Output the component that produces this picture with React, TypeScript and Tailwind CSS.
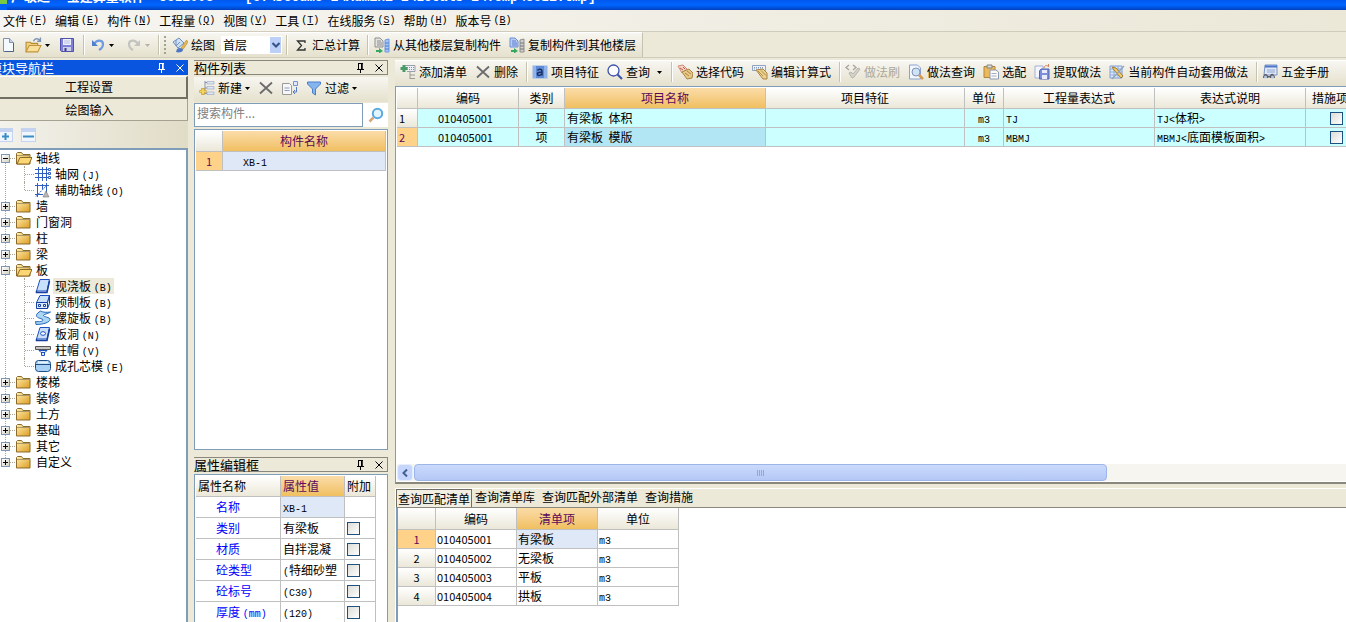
import type { ReactNode } from 'react';
import clsx from 'clsx';

const GRAD_HEAD = 'bg-gradient-to-b from-white to-[#ebe8d9]';
const GRAD_HOT = 'bg-gradient-to-b from-[#fbdca8] to-[#f0bf5f] text-[#5a0a5a]';
const GRAD_BAR = 'bg-gradient-to-b from-[#f7f6f1] to-[#e5e1cd]';
const CELL = 'border-r border-b border-[#c0c0c0] p-0 font-normal whitespace-nowrap overflow-hidden';

// Latin runs are set half as wide as the Chinese characters around them
function Mixed({ text }: { text: string }) {
  return (
    <>
      {text.split(/([\x21-\x7e]+)/).map((part, i) => {
        if (!part) return null;
        if (/^\d+$/.test(part)) return <span key={i} className="text-[11px] leading-none">{part}</span>;
        if (i % 2) return <span key={i} className="font-['Liberation_Mono',monospace] text-[10px] leading-none">{part}</span>;
        return <span key={i}>{part}</span>;
      })}
    </>
  );
}

/* ---------- icons ---------- */

function Svg({ children, size = 16 }: { children: ReactNode; size?: number }) {
  return <svg width={size} height={size} viewBox="0 0 16 16" className="shrink-0" aria-hidden="true">{children}</svg>;
}

const NewFile = () => (
  <Svg>
    <path d="M3.500 1.500h6l4 4v9h-10z" fill="#f4f8ff" stroke="#8391ad" />
    <path d="M9.500 1.500v4h4" fill="#c9d6ec" stroke="#8391ad" />
    <path d="M13.500 6v8.500h-9" fill="none" stroke="#4e6284" />
  </Svg>
);

const OpenFile = () => (
  <Svg size={17}>
    <path d="M1 14V5h4l1 1h6v3" fill="#f2d080" stroke="#b58b30" />
    <path d="M1 14l3-6h11l-3 6z" fill="#fbe09a" stroke="#c1933a" />
    <path d="M8 4c1-3 4-3 6-1M14.500 0.500v3.500h-3" fill="none" stroke="#7d93b5" strokeWidth="1.300" />
  </Svg>
);

const Save = () => (
  <Svg>
    <path d="M1.500 1.500h13v13h-12l-1-1z" fill="#7f80d8" stroke="#5152ac" />
    <path d="M4 2h8v6H4z" fill="#eef0fb" />
    <path d="M5 4h6M5 6h6" stroke="#b9bde3" />
    <path d="M4 10h8v4H4z" fill="#cdd0e8" />
    <path d="M5.500 11h2v3h-2z" fill="#3a3b86" />
  </Svg>
);

const Undo = ({ off = false }: { off?: boolean }) => (
  <Svg>
    <g transform={off ? 'matrix(-1 0 0 1 16 0)' : undefined}>
      <path d="M4 7c3-5 9-4 9 0 0 3-2 5-4 6" fill="none" stroke={off ? '#c3c3bf' : '#6e9be0'} strokeWidth="2.200" />
      <path d="M2 3v6h6z" fill={off ? '#c3c3bf' : '#4f7fd0'} />
    </g>
  </Svg>
);

const Draw = () => (
  <Svg>
    <path d="M1 5l6-4 5 5-6 5z" fill="#cfe0f4" stroke="#6d8fc0" />
    <path d="M4 3v6l4-4" fill="none" stroke="#6d8fc0" />
    <path d="M14.500 3L9 11l2 1.500L16 5z" fill="#e9b84c" stroke="#9d7a2c" strokeWidth=".5" />
    <path d="M5 12c2-2 6-1 6 1s-4 3-7 2z" fill="#4d78c4" />
  </Svg>
);

const CopyFloor = ({ flip = false }: { flip?: boolean }) => (
  <Svg>
    <path d="M1 1h5l3 3v6H1z" fill={flip ? '#b9cdf3' : '#e3e3e3'} stroke={flip ? '#6a8ed8' : '#8f8f8f'} />
    <path d="M3 4h4M3 6h5M3 8h5" stroke={flip ? '#5d7fd0' : '#8b8b8b'} />
    <path d="M11 3l4-1v13h-4z" fill={flip ? '#cfcfcf' : '#a9c5f5'} stroke={flip ? '#8d8d8d' : '#6c98e0'} />
    <path d="M11 6h4M11 9h4M11 12h4" stroke={flip ? '#777' : '#4d7fd6'} />
    <path d="M2 11v2h3v-2l4 3-4 2.500V15H2z" fill="#37a860" />
  </Svg>
);

const AddList = () => (
  <Svg>
    <path d="M5 1.500h10v6H7" fill="#eef0f4" stroke="#9aa0ac" />
    <path d="M7 3.500h7M7 5.500h7" stroke="#8b93a8" strokeDasharray="1 1" />
    <path d="M10 8v7M10 11h5M10 14.500h5" fill="none" stroke="#9a9a9a" />
    <path d="M4 1v7M.5 4.500h7" stroke="#4b9b68" strokeWidth="3" />
  </Svg>
);

const Cross = () => (
  <Svg><path d="M2 2.500l12 11M14 2.500l-12 11" stroke="#6b6b6b" strokeWidth="1.800" fill="none" /></Svg>
);

const Feature = () => (
  <Svg>
    <path d="M.5 1.500h15v13H.5z" fill="#8fb3ea" />
    <path d="M4 2h8v12H4z" fill="#5d8bd6" />
    <path d="M5.500 6.500c1-2 4.500-1.500 4.500.5v4.500M10 8.500c-4-.5-5 .5-4.500 2s3 1 4.500-.5" fill="none" stroke="#1b2f63" strokeWidth="1.500" />
  </Svg>
);

const Magnify = ({ soft = false }: { soft?: boolean }) => (
  <Svg>
    {soft ? (
      <>
        <path d="M5.500 10.500L1.500 14.500" stroke="#d8a878" strokeWidth="2.500" />
        <circle cx="9.500" cy="6.500" r="4.700" fill="#e2f4fc" stroke="#5aa9e0" strokeWidth="2" />
      </>
    ) : (
      <>
        <circle cx="6.500" cy="6.500" r="5.500" fill="#fdfdff" stroke="#3b4fae" strokeWidth="1.300" />
        <path d="M10.500 10.500l4.500 4.500" stroke="#3b4fae" strokeWidth="2" />
      </>
    )}
  </Svg>
);

const PickCode = () => (
  <Svg>
    <path d="M1 2l5-1 4 4-5 4z" fill="#f6d3c4" stroke="#cf8d78" />
    <path d="M3 4l3 2M6 3l2 2" stroke="#c05a4a" />
    <path d="M5 8l7-3 4 4-1 5-5 1z" fill="#e8c987" stroke="#a98343" />
    <path d="M8 9l4 3M10 7l4 3" stroke="#a98343" />
  </Svg>
);

const EditExpr = () => (
  <Svg>
    <path d="M.5 1.500h13v5H.5z" fill="#eef3fb" stroke="#90a3c4" />
    <path d="M2 3.500h10M2 5h10" stroke="#8598bb" strokeDasharray="1 1" />
    <path d="M4 6l7-1 4 4v6h-4z" fill="#ecd08e" stroke="#a98343" />
    <path d="M6 7l5 5M9 6.500l5 5" stroke="#b18c4a" />
  </Svg>
);

const BrushOff = () => (
  <Svg>
    <path d="M4 1L1 3.500 4 6M8 1l3 2.500L8 6" fill="none" stroke="#a5a5a0" strokeWidth="1.300" />
    <path d="M4 9l3 5 2-1 6-8-2-1-5 6-2-2z" fill="#d4d3cc" stroke="#b5b4ac" />
  </Svg>
);

const FindDoc = () => (
  <Svg>
    <path d="M1.500 1h8l3 3v11h-11z" fill="#f2f7ff" stroke="#8aa2cc" />
    <circle cx="8" cy="8" r="4" fill="#cfe2f6" stroke="#7d92b5" />
    <path d="M11 11l4 4" stroke="#d89a4e" strokeWidth="2.500" />
  </Svg>
);

const Paste = () => (
  <Svg>
    <path d="M1 2.500h11v11H1z" fill="#e9b95c" stroke="#b2843a" />
    <path d="M4 1h5v3H4z" fill="#d9d9d9" stroke="#858585" />
    <path d="M7 6h6l2.500 2v7H7z" fill="#fafafa" stroke="#8e98ad" />
    <path d="M8.500 9.500h5M8.500 12h5" stroke="#a4aec4" />
  </Svg>
);

const Extract = () => (
  <Svg>
    <path d="M1 2h8v12H1z" fill="#f3f6ff" stroke="#a3b0d6" />
    <path d="M7 5h8v10H5.500V7z" fill="#7d8fdc" stroke="#5263b3" />
    <path d="M8 6h5v3H8zM8 11h5v4H8z" fill="#e8ecfb" />
    <path d="M10 4c0-2 2-3 4-2M14.500 0v3" fill="none" stroke="#d0835a" />
  </Svg>
);

const AutoApply = () => (
  <Svg>
    <path d="M1 2h12v12H1z" fill="#dce9fb" stroke="#7c9ed6" />
    <path d="M1 5h12M1 8h12M1 11h12M5 2v12M9 2v12" stroke="#8faee0" />
    <path d="M3 3l4 1 7 8-2 2-7-8z" fill="#f0cd6a" stroke="#a37d30" />
    <path d="M15 2L3 15" stroke="#93a3bf" strokeWidth="1.300" />
  </Svg>
);

const Handbook = () => (
  <Svg>
    <path d="M3 1h12v10H2z" fill="#dfe8f8" stroke="#7a93c4" />
    <path d="M3 2.500h12" stroke="#4f77c8" strokeWidth="2" />
    <path d="M5 6h8M5 8h8" stroke="#92a6cf" />
    <path d="M1 14c0-5 4-5 5-2h2c1-4 5-2 5 2H8l-1-1-1 1z" fill="#5b5f68" />
    <circle cx="3.500" cy="13" r="1.500" fill="#b6c7e4" />
    <circle cx="10.500" cy="13" r="1.500" fill="#b6c7e4" />
  </Svg>
);

const NewItem = () => (
  <Svg>
    <path d="M6 1v13M6 2.500h9M6 8h9M6 13.500h9" fill="none" stroke="#8295b5" />
    <path d="M8 1.500h7v2.500H8zM8 6.500h7V9H8zM8 12h7v2.500H8z" fill="#dfe6f2" stroke="#93a3c0" strokeWidth=".6" />
    <path d="M4 8v7M.5 11.500h7" stroke="#b98f28" strokeWidth="3.200" />
    <path d="M4 8.500v6M1 11.500h6" stroke="#f4d665" strokeWidth="1.800" />
  </Svg>
);

const CopyItem = () => (
  <Svg>
    <path d="M.5 3.500h7l2 2v9h-9z" fill="#f7f7f7" stroke="#9a9a9a" />
    <path d="M2.500 8h5M2.500 10.500h5" stroke="#8e9dbd" />
    <path d="M11.500 1.500h4v4h-4z" fill="#dfe9fb" stroke="#7893cd" />
    <path d="M14.500 7v5H11M13 10l-2 2 2 2" fill="none" stroke="#5478c6" />
  </Svg>
);

const Filter = () => (
  <Svg><path d="M1.500 2h13v2L9.500 9v6l-3-2V9l-5-5z" fill="#86b4ee" stroke="#4a7fcb" /></Svg>
);

const Folder = ({ open }: { open?: boolean }) => (
  <Svg>
    <defs>
      <linearGradient id="fold" x1="0" y1="0" x2="1" y2="1">
        <stop offset="0" stopColor="#fff0b0" />
        <stop offset="1" stopColor="#dd9c22" />
      </linearGradient>
    </defs>
    <path d="M.5 14V3.500l1-1h4l1.500 2h7V14z" fill="url(#fold)" stroke="#8c6a28" />
    <path d="M1 5.500h13" stroke="#a99a6a" />
    {open && <path d="M1 14L4 7.500h12L13 14z" fill="#fbd672" stroke="#8c6a28" />}
  </Svg>
);

const treeIcons: Record<string, ReactNode> = {
  grid: (
    <Svg>
      <path d="M3.500 1v14M7.500 1v14M11.500 1v14M0 3.500h13M0 7.500h13M0 11.500h13" stroke="#2f5fc4" />
      <path d="M13.500 2.500h2v2h-2zM13.500 6.500h2v2h-2zM13.500 10.500h2v2h-2z" fill="#fff" stroke="#2f5fc4" />
    </Svg>
  ),
  aux: (
    <Svg>
      <path d="M2.500 1v14M11.500 1v14M7.500 2v5M0 3.500h14M0 12.500h8" stroke="#2f5fc4" />
      <path d="M1 14.500L12 3" stroke="#2f5fc4" strokeDasharray="2 1" />
      <path d="M8 15l3-6 3 6z" fill="#b9b9b9" stroke="#777" strokeWidth=".6" />
    </Svg>
  ),
  slab: (
    <Svg>
      <path d="M5 1.500h9.500L12 13H1.500z" fill="#c9e0fb" stroke="#1c4fc0" />
      <path d="M1.500 13v1.500H12L14.500 3" fill="none" stroke="#173f9f" strokeWidth="1.500" />
    </Svg>
  ),
  precast: (
    <Svg>
      <path d="M5 1.500h9.500l-2 7H1.500z" fill="#c9e0fb" stroke="#1c4fc0" />
      <path d="M1.500 8.500h11v6h-11zM12.500 8.500l2-7v8l-2 5" fill="#dceafc" stroke="#173f9f" />
      <path d="M3.500 10.500h2v2h-2zM8.500 10.500h2v2h-2z" fill="#fff" stroke="#173f9f" />
    </Svg>
  ),
  spiral: (
    <Svg>
      <path d="M5.500 1C8 2.500 12 2.500 15.500 2 13 4 8.500 4 8.500 5.500S15 7 15 9.500 9 14.500 1 14.500l-.5-3C4 12 8 11.500 8 10S1.500 8.500 1.500 5.500c0-2 2-3 4-4.500z" fill="#a9d6f5" stroke="#2366b8" />
    </Svg>
  ),
  hole: (
    <Svg>
      <path d="M5 1.500h9.500L12 13H1.500z" fill="#c9e0fb" stroke="#1c4fc0" />
      <path d="M1.500 13v1.500H12L14.500 3" fill="none" stroke="#173f9f" strokeWidth="1.500" />
      <ellipse cx="8" cy="7.500" rx="2.500" ry="1.800" fill="#fff" stroke="#1c4fc0" />
    </Svg>
  ),
  cap: (
    <Svg>
      <path d="M.5 4.500h15v3H.5z" fill="#c4c4c4" stroke="#555" />
      <path d="M4 8.500h8l-2 2H6zM6.500 10.500h3v3h-3z" fill="#dceafc" stroke="#1c4fc0" />
    </Svg>
  ),
  core: (
    <Svg>
      <rect x=".5" y="2.500" width="15" height="11" rx="3" fill="#a9d0f5" stroke="#1d4f86" />
      <path d="M1 6.500h14" stroke="#1d4f86" />
      <path d="M3 4.500h10" stroke="#e6f3fd" strokeWidth="2" />
    </Svg>
  ),
};

const Pin = () => (
  <svg width="9" height="10" viewBox="0 0 9 10" className="shrink-0" aria-hidden="true">
    <path d="M2.500 0v6M6 0v6M2 .5h5M1 6.500h7M4.500 6v4" stroke="currentColor" fill="none" />
    <path d="M5 1h1.500v5H5z" fill="currentColor" />
  </svg>
);

const Close = () => (
  <svg width="8" height="8" viewBox="0 0 8 8" className="shrink-0" aria-hidden="true">
    <path d="M.5 .5l7 7M7.500 .5l-7 7" stroke="currentColor" />
  </svg>
);

const Caret = ({ off = false }: { off?: boolean }) => (
  <svg width="5" height="3" viewBox="0 0 5 3" className="shrink-0" aria-hidden="true">
    <path d="M0 0h5L2.500 3z" fill={off ? '#b5b3a6' : '#000'} />
  </svg>
);

/* ---------- shared parts ---------- */

const Sep = () => <span className="mx-1 box-content h-5 w-px shrink-0 border-r border-white bg-[#c5c2b0]" />;

function Tool({ icon, label, off, caret }: { icon: ReactNode; label?: string; off?: boolean; caret?: boolean }) {
  return (
    <button disabled={off} className={clsx('flex shrink-0 items-center gap-[3px] whitespace-nowrap', off && 'text-[#aca899]')}>
      {icon}
      {label}
      {caret && <Caret off={off} />}
    </button>
  );
}

function PanelTitle({ text }: { text: string }) {
  return (
    <div className="flex h-[15px] shrink-0 items-center border border-l-0 border-[#8a887c] text-[13px] leading-none">
      <h2 className="flex-1">{text}</h2>
      <button aria-label="固定" className="mr-[10px]"><Pin /></button>
      <button aria-label="关闭" className="mr-1"><Close /></button>
    </div>
  );
}

const Check = ({ label }: { label: string }) => (
  <input
    type="checkbox"
    aria-label={label}
    className="block size-[13px] appearance-none border border-[#1c5180] bg-gradient-to-br from-[#dcdcd7] to-white"
  />
);

/* ---------- data ---------- */

const menus = [
  ['文件', 'F'], ['编辑', 'E'], ['构件', 'N'], ['工程量', 'Q'], ['视图', 'V'],
  ['工具', 'T'], ['在线服务', 'S'], ['帮助', 'H'], ['版本号', 'B'],
];

type Node = { name: string; open?: boolean; items?: { name: string; icon: string; active?: boolean }[] };

const tree: Node[] = [
  { name: '轴线', open: true, items: [{ name: '轴网 (J)', icon: 'grid' }, { name: '辅助轴线 (O)', icon: 'aux' }] },
  { name: '墙' },
  { name: '门窗洞' },
  { name: '柱' },
  { name: '梁' },
  {
    name: '板',
    open: true,
    items: [
      { name: '现浇板 (B)', icon: 'slab', active: true },
      { name: '预制板 (B)', icon: 'precast' },
      { name: '螺旋板 (B)', icon: 'spiral' },
      { name: '板洞 (N)', icon: 'hole' },
      { name: '柱帽 (V)', icon: 'cap' },
      { name: '成孔芯模 (E)', icon: 'core' },
    ],
  },
  { name: '楼梯' }, { name: '装修' }, { name: '土方' }, { name: '基础' }, { name: '其它' }, { name: '自定义' },
];

const props = [
  ['名称', 'XB-1'], ['类别', '有梁板'], ['材质', '自拌混凝'],
  ['砼类型', '(特细砂塑'], ['砼标号', '(C30)'], ['厚度 (mm)', '(120)'],
];

const rows = [
  { code: '010405001', name: '有梁板  体积', expr: 'TJ', note: 'TJ<体积>' },
  { code: '010405001', name: '有梁板  模版', expr: 'MBMJ', note: 'MBMJ<底面模板面积>' },
];

const matches = [
  ['010405001', '有梁板'], ['010405002', '无梁板'], ['010405003', '平板'], ['010405004', '拱板'],
];

/* ---------- panels ---------- */

function NavPanel() {
  return (
    <nav className="flex w-[188px] shrink-0 flex-col">
      <div className="flex h-[15px] shrink-0 items-center overflow-hidden bg-[#0a55e0] text-[13px] leading-none text-white">
        <h2 className="-ml-[11px] flex-1 whitespace-nowrap">模块导航栏</h2>
        <button aria-label="固定" className="mr-[10px]"><Pin /></button>
        <button aria-label="关闭" className="mr-1"><Close /></button>
      </div>
      <button className="mt-px h-[23px] shrink-0 border-t border-r-2 border-b-2 border-[#716f64] border-t-white pr-2">工程设置</button>
      <button className="h-[22px] shrink-0 border-r border-b border-[#a5a291] pr-2">绘图输入</button>
      <div className="flex h-[27px] shrink-0 items-center gap-2 bg-gradient-to-r from-[#f3f2ec] to-[#e0dcc6]">
        <button aria-label="全部展开" className="-ml-[2px] flex h-[14px] w-[15px] items-end justify-center border border-t-4 border-[#c4d3ef] bg-[#f1f5fc]">
          <svg width="9" height="9" viewBox="0 0 9 9"><path d="M4.500 1v7M1 4.500h7" stroke="#3a8ec6" strokeWidth="2" /></svg>
        </button>
        <button aria-label="全部折叠" className="flex h-[14px] w-[15px] items-end justify-center border border-t-4 border-[#c4d3ef] bg-[#f1f5fc]">
          <svg width="11" height="9" viewBox="0 0 11 9"><path d="M0 4.500h11" stroke="#3a8ec6" strokeWidth="2" /></svg>
        </button>
      </div>
      <ul className="min-h-0 flex-1 overflow-hidden border-t-2 border-r-2 border-[#7f9db9] bg-white leading-4">
        {tree.map((node, n) => (
          <li
            key={node.name}
            className={clsx(
              'relative',
              n < tree.length - 1 && 'before:absolute before:top-2 before:left-[5px] before:h-full before:border-l before:border-dotted before:border-[#a8a595]',
            )}
          >
            <div className="flex h-4 items-center">
              <button
                aria-label={node.open ? '折叠' : '展开'}
                className="relative ml-px flex size-[9px] items-center justify-center border border-[#7898b5] bg-gradient-to-br from-white to-[#d5d0c0]"
              >
                <svg width="5" height="5" viewBox="0 0 5 5" className="shrink-0"><path d={node.open ? 'M0 2.500h5' : 'M0 2.500h5M2.500 0v5'} stroke="#000" /></svg>
              </button>
              <span className="mr-px w-[5px] border-t border-dotted border-[#a8a595]" />
              <Folder open={node.open} />
              <span className="ml-1">{node.name}</span>
            </div>
            {node.items && (
              <ul>
                {node.items.map((item, i) => (
                  <li
                    key={item.name}
                    className={clsx(
                      'relative flex h-4 items-center pl-[25px] before:absolute before:top-0 before:left-6 before:border-l before:border-dotted before:border-[#a8a595]',
                      i === node.items!.length - 1 ? 'before:h-2' : 'before:h-4',
                    )}
                  >
                    <span className="mr-px w-[9px] border-t border-dotted border-[#a8a595]" />
                    {treeIcons[item.icon]}
                    <a href="#" className={clsx('ml-[2px] px-[2px]', item.active && 'bg-[#ece9d8]')}><Mixed text={item.name} /></a>
                  </li>
                ))}
              </ul>
            )}
          </li>
        ))}
      </ul>
    </nav>
  );
}

function ComponentPanel() {
  return (
    <section className="flex w-[194px] shrink-0 flex-col">
      <PanelTitle text="构件列表" />
      <div className={clsx('mt-[2px] flex h-[25px] shrink-0 items-center gap-2 pb-[3px] pl-[5px]', GRAD_BAR)}>
        <Tool icon={<NewItem />} label="新建" caret />
        <Tool icon={<Cross />} />
        <Tool icon={<CopyItem />} />
        <Tool icon={<Filter />} label="过滤" caret />
      </div>
      <div className="mt-px flex h-6 shrink-0">
        <input aria-label="搜索构件" placeholder="搜索构件..." className="min-w-0 flex-1 border border-[#7f9db9] bg-white px-[2px] pb-1 text-xs placeholder:text-[#808080]" />
        <button aria-label="搜索" className="flex w-[25px] items-center justify-center bg-white"><Magnify soft /></button>
      </div>
      <div className="mt-[2px] min-h-0 flex-1 overflow-hidden border border-[#7f9db9] bg-white p-px">
        <table className="w-full table-fixed border-separate border-spacing-0">
          <colgroup><col className="w-[27px]" /><col /></colgroup>
          <thead>
            <tr className="h-[21px]">
              <th className={clsx(CELL, GRAD_HEAD)} />
              <th className={clsx(CELL, GRAD_HOT)}>构件名称</th>
            </tr>
          </thead>
          <tbody>
            <tr className="h-[19px]">
              <td className={clsx(CELL, 'bg-[#ffd28a] text-center text-[#5a0a5a]')}><Mixed text="1" /></td>
              <td className={clsx(CELL, 'bg-[#dfe8f6] pl-5')}><Mixed text="XB-1" /></td>
            </tr>
          </tbody>
        </table>
      </div>
      <div className="mt-[7px] flex h-[165px] shrink-0 flex-col">
        <PanelTitle text="属性编辑框" />
        <div className="mt-[2px] min-h-0 flex-1 overflow-hidden border border-b-0 border-[#7f9db9] bg-white p-px">
          <table className="w-[180px] table-fixed border-separate border-spacing-0">
            <colgroup><col className="w-[85px]" /><col className="w-[64px]" /><col className="w-[31px]" /></colgroup>
            <thead>
              <tr className="h-[21px] text-left">
                <th className={clsx(CELL, GRAD_HEAD, 'pl-[2px]')}>属性名称</th>
                <th className={clsx(CELL, GRAD_HOT, 'pl-[2px]')}>属性值</th>
                <th className={clsx(CELL, GRAD_HEAD, 'pl-[2px]')}>附加</th>
              </tr>
            </thead>
            <tbody>
              {props.map(([name, value], i) => (
                <tr key={name} className="h-[21px]">
                  <td className={clsx(CELL, 'pl-5 text-[#0000ff]')}><Mixed text={name} /></td>
                  <td className={clsx(CELL, 'pl-[2px]', i === 0 && 'bg-[#dfe8f6]')}><Mixed text={value} /></td>
                  <td className={clsx(CELL, 'pl-[2px]')}>{i > 0 && <Check label={`附加 ${name}`} />}</td>
                </tr>
              ))}
            </tbody>
          </table>
        </div>
      </div>
    </section>
  );
}

function MainToolbar() {
  return (
    <div className={clsx('flex h-[26px] shrink-0 items-center gap-2 overflow-hidden border-t border-white pb-[3px] pl-[5px]', GRAD_BAR)}>
      <Tool icon={<AddList />} label="添加清单" />
      <Tool icon={<Cross />} label="删除" />
      <div className="-ml-1 flex items-center"><Sep /><Tool icon={<Feature />} label="项目特征" /></div>
      <button className="mr-px flex shrink-0 items-center gap-[3px] whitespace-nowrap">
        <Magnify />
        <span className="mr-1">查询</span>
        <Caret />
      </button>
      <div className="-ml-1 flex items-center"><Sep /><Tool icon={<PickCode />} label="选择代码" /></div>
      <Tool icon={<EditExpr />} label="编辑计算式" />
      <div className="-ml-1 flex items-center"><Sep /><Tool icon={<BrushOff />} label="做法刷" off /></div>
      <Tool icon={<FindDoc />} label="做法查询" />
      <Tool icon={<Paste />} label="选配" />
      <Tool icon={<Extract />} label="提取做法" />
      <Tool icon={<AutoApply />} label="当前构件自动套用做法" />
      <div className="-ml-1 flex items-center"><Sep /><Tool icon={<Handbook />} label="五金手册" /></div>
    </div>
  );
}

function ItemTable() {
  return (
    <table className="w-[970px] min-w-full table-fixed border-separate border-spacing-0">
      <colgroup>
        <col className="w-[21px]" /><col className="w-[101px]" /><col className="w-[46px]" />
        <col className="w-[201px]" /><col className="w-[199px]" /><col className="w-[39px]" />
        <col className="w-[151px]" /><col className="w-[151px]" /><col className="w-[61px]" />
      </colgroup>
      <thead>
        <tr className="h-[21px]">
          {['', '编码', '类别', '项目名称', '项目特征', '单位', '工程量表达式', '表达式说明', '措施项目'].map((h, i) => (
            <th key={i} className={clsx(CELL, i === 3 ? GRAD_HOT : GRAD_HEAD)}>{h}</th>
          ))}
        </tr>
      </thead>
      <tbody>
        {rows.map((r, i) => (
          <tr key={i} className="h-[19px] bg-[#ccffff]">
            <td className={clsx(CELL, 'pl-[2px]', i === 1 ? 'bg-[#ffd28a] text-[#5a0a5a]' : GRAD_HEAD)}><Mixed text={String(i + 1)} /></td>
            <td className={clsx(CELL, 'pl-5')}><Mixed text={r.code} /></td>
            <td className={clsx(CELL, 'text-center')}>项</td>
            <td className={clsx(CELL, 'pl-[2px] whitespace-pre', i === 1 && 'bg-[#b3e6f4]')}>{r.name}</td>
            <td className={CELL} />
            <td className={clsx(CELL, 'text-center')}><Mixed text="m3" /></td>
            <td className={clsx(CELL, 'pl-[2px]')}><Mixed text={r.expr} /></td>
            <td className={clsx(CELL, 'pl-[2px]')}><Mixed text={r.note} /></td>
            <td className={clsx(CELL, 'pl-6')}><Check label={`措施项目 ${i + 1}`} /></td>
          </tr>
        ))}
      </tbody>
    </table>
  );
}

function QueryPanel() {
  return (
    <div className="mt-[4px] flex h-[134px] shrink-0 flex-col border-t border-l border-white">
      <div role="tablist" className="flex h-[19px] shrink-0 items-start border-b border-[#8a887c]">
        <button role="tab" aria-selected="true" className="h-[18px] border border-b-0 border-[#716f64] bg-[#f1efe3] px-px">查询匹配清单</button>
        {['查询清单库', '查询匹配外部清单', '查询措施'].map(t => (
          <button key={t} role="tab" aria-selected="false" className="ml-[3px] pr-1 leading-4">{t}</button>
        ))}
      </div>
      <div className="min-h-0 flex-1 overflow-hidden border-l-2 border-[#7f9db9] bg-white">
        <table className="w-[281px] table-fixed border-separate border-spacing-0">
          <colgroup><col className="w-[38px]" /><col className="w-[81px]" /><col className="w-[81px]" /><col className="w-[81px]" /></colgroup>
          <thead>
            <tr className="h-[22px]">
              {['', '编码', '清单项', '单位'].map((h, i) => (
                <th key={i} className={clsx(CELL, i === 2 ? GRAD_HOT : GRAD_HEAD)}>{h}</th>
              ))}
            </tr>
          </thead>
          <tbody>
            {matches.map(([code, name], i) => (
              <tr key={code} className="h-[19px]">
                <td className={clsx(CELL, 'text-center', i === 0 ? 'bg-[#ffd28a] text-[#5a0a5a]' : GRAD_HEAD)}><Mixed text={String(i + 1)} /></td>
                <td className={clsx(CELL, 'pl-px')}><Mixed text={code} /></td>
                <td className={clsx(CELL, 'pl-px', i === 0 && 'bg-[#dfe8f6]')}>{name}</td>
                <td className={clsx(CELL, 'pl-px')}><Mixed text="m3" /></td>
              </tr>
            ))}
          </tbody>
        </table>
      </div>
    </div>
  );
}

export default function App() {
  return (
    <div className="flex h-screen flex-col overflow-hidden bg-[#ece9d8] font-['Noto_Sans_CJK_SC',sans-serif] text-xs leading-4 text-black">
      <header className="flex h-[10px] shrink-0 items-end overflow-hidden bg-gradient-to-b from-[#0058ee] via-[#0066ff] to-[#0040c0]">
        <span className="h-[10px] w-[7px] shrink-0 border-b-[6px] border-[#0062f8] bg-[#7ac943]" />
        <h1 className="mb-[4px] ml-1 text-[13px] leading-4 font-bold whitespace-pre text-white">
          广联达<span className="px-[6px]">-</span>宝建算量软件
          <span className="ml-[14px] font-['Liberation_Mono',monospace]">GCL2008  - [C:\Docume~1\Admini~1\Locals~1\Temp\GCL1.tmp]</span>
        </h1>
      </header>

      <div role="menubar" className="flex h-[21px] shrink-0 items-center gap-2 bg-gradient-to-r from-[#f6f5f1] to-[#ebe8d8] pl-[3px]">
        {menus.map(([name, key]) => (
          <button key={name} role="menuitem" className="flex items-center gap-[2px] whitespace-nowrap">
            {name}
            <span className="font-['Liberation_Mono',monospace] text-[10px]">(<u>{key}</u>)</span>
          </button>
        ))}
      </div>

      <div className="flex h-[27px] shrink-0 border-t border-b border-[#cfccbb]">
        <div className={clsx('flex items-center border-t border-r border-white border-r-[#c5c2b0] pr-[6px]', GRAD_BAR)}>
          <div className="flex items-center gap-[9px] pr-1">
            <Tool icon={<NewFile />} />
            <Tool icon={<OpenFile />} caret />
            <Tool icon={<Save />} />
          </div>
          <Sep />
          <div className="ml-px flex items-center gap-3 pr-1">
            <Tool icon={<Undo />} caret />
            <Tool icon={<Undo off />} off caret />
          </div>
          <Sep />
          <span className="mr-[6px] h-[18px] border-l-2 border-dotted border-[#a5a291]" />
          <Tool icon={<Draw />} label="绘图" />
          <div className="relative ml-[6px] flex h-[18px] items-center bg-white">
            <select aria-label="楼层" className="h-[18px] w-[61px] appearance-none bg-white pl-[2px] leading-4"><option>首层</option></select>
            <span className="pointer-events-none absolute right-px flex h-4 w-[11px] items-center justify-center bg-[#bccff6]">
              <svg width="8" height="6" viewBox="0 0 8 6"><path d="M.5 1L4 4.500 7.500 1" fill="none" stroke="#35538a" strokeWidth="2" /></svg>
            </span>
          </div>
          <Sep />
          <button className="mr-[3px] ml-1 flex items-center gap-[6px] whitespace-nowrap">
            <svg width="10" height="11" viewBox="0 0 10 11"><path d="M9 3V1H1.500L5.500 5.500 1.500 10H9V8" fill="none" stroke="#333" strokeWidth="1.300" /></svg>
            汇总计算
          </button>
          <Sep />
          <div className="ml-px flex items-center gap-2">
            <Tool icon={<CopyFloor />} label="从其他楼层复制构件" />
            <Tool icon={<CopyFloor flip />} label="复制构件到其他楼层" />
          </div>
        </div>
      </div>

      <div className="flex min-h-0 flex-1 gap-[6px] pt-[2px]">
        <NavPanel />
        <ComponentPanel />
        <main className="ml-px flex min-w-0 flex-1 flex-col">
          <MainToolbar />
          <div className="flex min-h-0 flex-1 flex-col border-t border-b-2 border-l border-[#7f9db9] border-b-[#8a887c] bg-white pt-px pl-px">
            <div className="min-h-0 flex-1 overflow-hidden"><ItemTable /></div>
            <div className="flex h-[17px] shrink-0 bg-[#f6f5f0]">
              <button aria-label="向左滚动" className="mr-px flex w-4 items-center justify-center rounded-sm border border-[#e6eefc] bg-[#c5d5fb]">
                <svg width="6" height="8" viewBox="0 0 6 8"><path d="M5 .5L1.500 4 5 7.500" fill="none" stroke="#44608f" strokeWidth="2" /></svg>
              </button>
              <div className="flex w-[73%] items-center justify-center gap-px rounded-sm border border-[#9db5e8] bg-gradient-to-b from-[#cbdafd] to-[#b4c8f6]">
                {[0, 1, 2, 3].map(i => <span key={i} className="h-[6px] w-px bg-[#8ea7dc]" />)}
              </div>
            </div>
            <div className="h-px shrink-0" />
          </div>
          <QueryPanel />
        </main>
      </div>
    </div>
  );
}
